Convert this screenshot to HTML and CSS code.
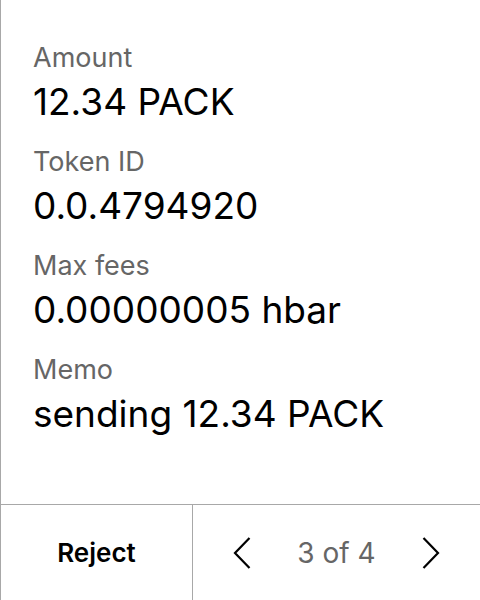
FILE: index.html
```html
<!DOCTYPE html>
<html>
<head>
<meta charset="utf-8">
<link rel="stylesheet" href="styles.css">
</head>
<body>
<div class="screen">
  <div class="details">
    <div class="field">
      <div class="label">Amount</div>
      <div class="value">12.34 PACK</div>
    </div>
    <div class="field">
      <div class="label">Token ID</div>
      <div class="value">0.0.4794920</div>
    </div>
    <div class="field">
      <div class="label">Max fees</div>
      <div class="value">0.00000005 hbar</div>
    </div>
    <div class="field">
      <div class="label">Memo</div>
      <div class="value">sending 12.34 PACK</div>
    </div>
  </div>
  <div class="footer">
    <div class="reject">Reject</div>
    <div class="pager">
      <svg class="chev" width="20" height="32" viewBox="0 0 20 32"><path d="M17.5 1 L3 16 L17.5 31" fill="none" stroke="#000" stroke-width="2.2"/></svg>
      <span class="count">3 of 4</span>
      <svg class="chev" width="20" height="32" viewBox="0 0 20 32"><path d="M2.5 1 L17 16 L2.5 31" fill="none" stroke="#000" stroke-width="2.2"/></svg>
    </div>
  </div>
</div>
</body>
</html>
```

FILE: styles.css
```css
html, body {
  margin: 0;
  padding: 0;
  background: #fff;
}
.screen {
  width: 480px;
  height: 600px;
  box-sizing: border-box;
  border-left: 1px solid #a8a8a8;
  display: flex;
  flex-direction: column;
  font-family: Inter, "Noto Sans", sans-serif;
  color: #000;
}
.details {
  flex: 1;
  padding: 41px 0 0 32px;
  display: flex;
  flex-direction: column;
  gap: 17px;
}
.field {
  display: flex;
  flex-direction: column;
}
.label {
  font-size: 27px;
  line-height: 34px;
  color: #666;
}
.value {
  font-size: 37px;
  line-height: 53px;
}
.footer {
  height: 95px;
  flex: none;
  border-top: 1px solid #a8a8a8;
  display: flex;
}
.reject {
  width: 191px;
  border-right: 1px solid #a8a8a8;
  display: flex;
  align-items: center;
  justify-content: center;
  font-size: 26px;
  font-weight: 600;
}
.pager {
  flex: 1;
  display: flex;
  align-items: center;
  justify-content: center;
  gap: 45px;
}
.count {
  font-size: 28px;
  color: #666;
}
.chev {
  display: block;
}
```
